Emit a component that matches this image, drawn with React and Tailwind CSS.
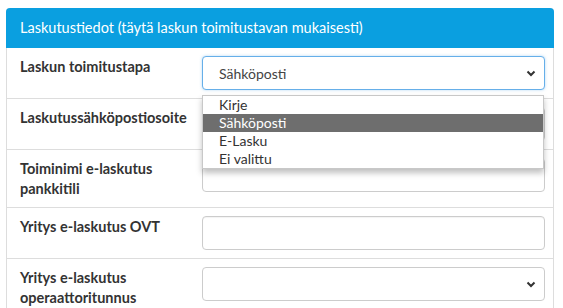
const Chevron = () => (
  <svg width="10" height="7" viewBox="0 0 10 7" fill="none" stroke="#333" strokeWidth="2">
    <polyline points="1.5,1.5 5,5 8.5,1.5" />
  </svg>
);

const Row = ({ label, children, last }) => (
  <div className={`flex ${last ? '' : 'border-b border-[#dddddd]'}`}>
    <div className="w-[195px] shrink-0 pl-[13px] pr-2 pt-[9px] pb-2 text-[14.5px] leading-[20px] font-bold text-[#333]">
      {label}
    </div>
    <div className="flex-1 py-2 pr-2">{children}</div>
  </div>
);

const TextInput = () => (
  <div className="h-[34px] rounded-[4px] border border-[#cccccc] bg-white shadow-[inset_0_1px_1px_rgba(0,0,0,0.05)]" />
);

export default function App() {
  const options = ['Kirje', 'Sähköposti', 'E-Lasku', 'Ei valittu'];
  return (
    <div className="h-[308px] w-[563px] overflow-hidden bg-white pl-[6px] pt-[8px] font-['Lato','Open_Sans',sans-serif]">
      <div className="w-[548px] rounded-t-[4px] border border-[#dddddd] border-t-0">
        <div className="-mx-px flex h-[40px] items-center rounded-t-[4px] bg-[#0a9fe0] px-[14px] text-[14.5px] text-white">
          Laskutustiedot (täytä laskun toimitustavan mukaisesti)
        </div>

        <Row label="Laskun toimitustapa">
          <div className="relative">
            <div className="flex h-[34px] items-center justify-between rounded-[4px] border border-[#66afe9] bg-white pl-4 pr-[8px] text-[14px] text-[#444] shadow-[0_0_3px_rgba(102,175,233,0.5)]">
              <span>Sähköposti</span>
              <Chevron />
            </div>
            <div className="absolute left-0 right-px top-[39px] z-10 border border-[#c8c8c8] bg-white shadow-[0_4px_6px_rgba(0,0,0,0.25)]">
              {options.map((o) => (
                <div
                  key={o}
                  className={`h-[18px] pl-4 text-[14px] leading-[18px] ${
                    o === 'Sähköposti' ? 'bg-[#6e6e6e] text-white' : 'text-[#333]'
                  }`}
                >
                  {o}
                </div>
              ))}
            </div>
          </div>
        </Row>

        <Row label="Laskutussähköpostiosoite">
          <TextInput />
        </Row>

        <Row label={<>Toiminimi e-laskutus<br />pankkitili</>}>
          <TextInput />
        </Row>

        <Row label="Yritys e-laskutus OVT">
          <TextInput />
        </Row>

        <Row label={<>Yritys e-laskutus<br />operaattoritunnus</>} last>
          <div className="flex h-[34px] items-center justify-end rounded-[4px] border border-[#cccccc] bg-white pr-[8px]">
            <Chevron />
          </div>
        </Row>
      </div>
    </div>
  );
}
